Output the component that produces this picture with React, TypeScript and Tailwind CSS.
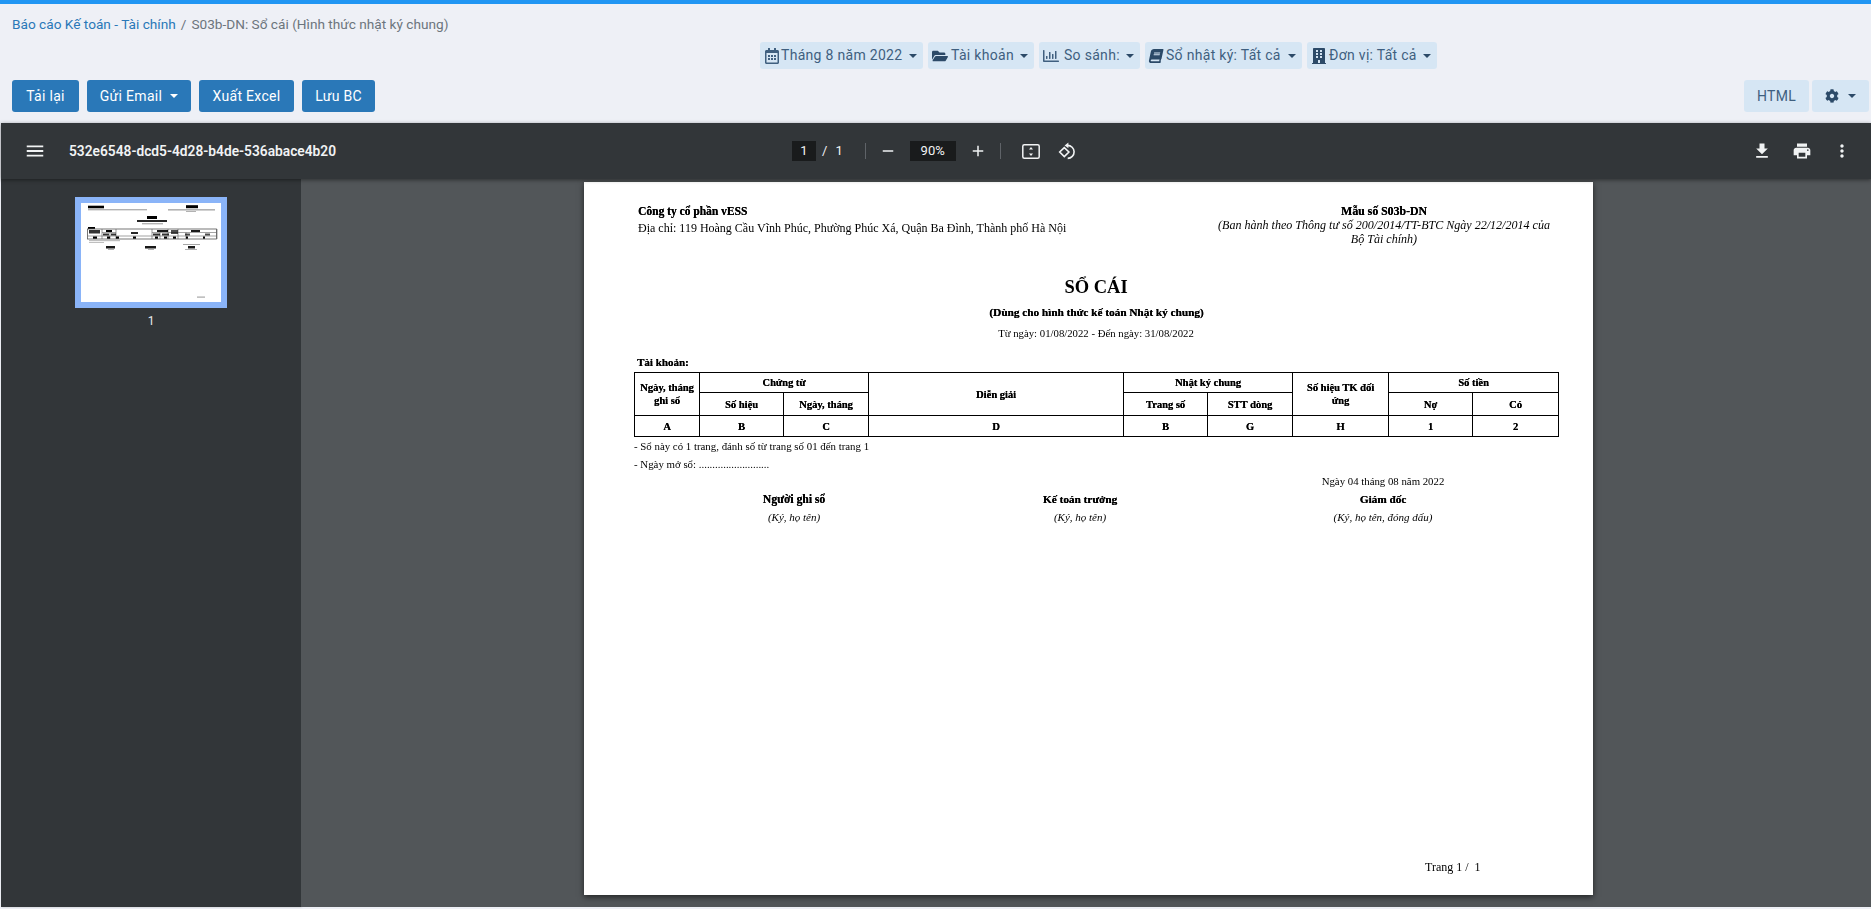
import React from "react";
import { FaRegCalendarAlt, FaFolderOpen, FaRegChartBar, FaBook, FaBuilding, FaCog } from "react-icons/fa";
import { MdMenu, MdRemove, MdAdd, MdFileDownload, MdPrint, MdMoreVert } from "react-icons/md";

const Caret = ({ cls = "" }: { cls?: string }) => (
  <span className={`inline-block w-0 h-0 border-x-[4px] border-x-transparent border-t-[4px] ${cls}`} />
);

const Filter = ({ icon, label, w, gap, pl }: { icon: React.ReactNode; label: string; w: string; gap: string; pl: string }) => (
  <button className={`${w} ${pl} h-[27px] flex items-center justify-between pr-[6px] rounded-[3px] bg-[#d6e6f4] text-[#3f5f7f] text-[14px] tracking-[0.3px] whitespace-nowrap`}>
    <span className={`flex items-center ${gap}`}>{icon}<span>{label}</span></span>
    <Caret cls="border-t-[#2c4a68]" />
  </button>
);

const Primary = ({ label, w, caret }: { label: string; w: string; caret?: boolean }) => (
  <button className={`${w} h-[32px] flex items-center justify-center gap-[8px] rounded-[3px] bg-[#2a78b8] text-white text-[14px] tracking-[0.3px]`}>
    <span>{label}</span>
    {caret && <Caret cls="border-t-white" />}
  </button>
);

const Th = ({ children, ...p }: React.ThHTMLAttributes<HTMLTableCellElement>) => (
  <th {...p} className="border border-black font-bold [text-shadow:0.2px_0_0_#000] text-center align-middle py-0 px-[5px] leading-[13px]">{children}</th>
);

const Thumb = () => (
  <svg width="140" height="99" viewBox="0 0 140 99" className="block bg-white">
    <g fill="#000" className="blur-[0.4px]">
      <rect x="7" y="2.7" width="16" height="2.6" />
      <rect x="7" y="6" width="59" height="1.4" opacity=".3" />
      <rect x="105" y="2.2" width="12" height="3" />
      <rect x="87" y="6" width="47" height="1.6" opacity=".3" />
      <rect x="105" y="8" width="10" height="1" opacity=".3" />
      <rect x="66" y="13" width="10" height="3" />
      <rect x="56" y="17" width="30" height="2" opacity=".85" />
      <rect x="61" y="20" width="21" height="1.4" opacity=".3" />
      <rect x="7" y="24" width="7" height="2" />
      <rect x="6.5" y="26" width="129" height="10" fill="none" stroke="#555" strokeWidth="0.8" />
      <path d="M21 26v10M29 29.5v6.5M35 26v10M71 26v10M79 29.5v6.5M87 26v10M97 26v10M105 29.5v6.5M136 26v10" stroke="#555" strokeWidth="0.6" />
      <path d="M21 29.5H35M71 29.5H97M97 29.5H136M6.5 33H136" stroke="#666" strokeWidth="0.6" />
      <rect x="8" y="27" width="11" height="3.5" opacity=".8" />
      <rect x="25" y="27" width="6" height="2" />
      <rect x="22" y="30.5" width="6" height="2" opacity=".8" />
      <rect x="30" y="30.5" width="5" height="2" opacity=".8" />
      <rect x="50" y="29" width="7" height="2" opacity=".85" />
      <rect x="76" y="27" width="11" height="2" opacity=".9" />
      <rect x="72" y="30.5" width="7" height="2" opacity=".8" />
      <rect x="81" y="30.5" width="7" height="2" opacity=".8" />
      <rect x="90" y="27" width="7" height="4" opacity=".7" />
      <rect x="110" y="27" width="9" height="2" opacity=".9" />
      <rect x="104" y="30.5" width="5" height="2" opacity=".7" />
      <rect x="124" y="30.5" width="5" height="2" opacity=".7" />
      <rect x="12" y="33.5" width="4" height="2.2" />
      <rect x="26" y="33.5" width="3" height="2.2" />
      <rect x="35" y="33.5" width="3" height="2.2" />
      <rect x="52" y="33.5" width="3" height="2.2" />
      <rect x="74" y="33.5" width="3" height="2.2" />
      <rect x="83" y="33.5" width="3" height="2.2" />
      <rect x="92" y="33.5" width="3" height="2.2" />
      <rect x="105" y="33.5" width="2" height="2.2" />
      <rect x="122" y="33.5" width="2" height="2.2" />
      <rect x="8" y="37" width="31" height="1.2" opacity=".25" />
      <rect x="8" y="39" width="15" height="1" opacity=".25" />
      <rect x="102" y="41" width="17" height="1" opacity=".35" />
      <rect x="25" y="43" width="9" height="2.5" opacity=".9" />
      <rect x="64" y="43" width="11" height="2.5" opacity=".9" />
      <rect x="107" y="43" width="7" height="2.5" opacity=".9" />
      <rect x="27" y="46" width="6" height="1" opacity=".3" />
      <rect x="67" y="46" width="6" height="1" opacity=".3" />
      <rect x="104" y="46" width="12" height="1" opacity=".3" />
      <rect x="116" y="93.5" width="8" height="1.2" opacity=".35" />
    </g>
  </svg>
);

const bold = "font-bold [text-shadow:0.2px_0_0_#000]";

export default function App() {
  return (
    <div className="h-[909px] overflow-hidden bg-[#eef0f6] border-t-4 border-[#2196f3] flex flex-col font-['Roboto',sans-serif]">
      <div className="h-[119px] shrink-0 pl-[12px] pr-[2px] flex flex-col">
        <div className="h-[38px] pt-[11px] text-[13.65px] leading-[18px] whitespace-nowrap">
          <span className="text-[#2a78b8]">Báo cáo Kế toán - Tài chính</span>
          <span className="text-[#6c757d] px-[5px]">/</span>
          <span className="text-[#6c757d]">S03b-DN: Sổ cái (Hình thức nhật ký chung)</span>
        </div>
        <div className="flex gap-[5px] pl-[748px]">
          <Filter w="w-[163px]" pl="pl-[4px]" gap="gap-[1px]" label="Tháng 8 năm 2022" icon={<FaRegCalendarAlt className="text-[16px]" />} />
          <Filter w="w-[106px]" pl="pl-[4px]" gap="gap-[3px]" label="Tài khoản" icon={<FaFolderOpen className="text-[16px] text-[#2c4a68]" />} />
          <Filter w="w-[101px]" pl="pl-[4px]" gap="gap-[5px]" label="So sánh:" icon={<FaRegChartBar className="text-[16px]" />} />
          <Filter w="w-[157px]" pl="pl-[4px]" gap="gap-[3px]" label="Sổ nhật ký: Tất cả" icon={<FaBook className="text-[14px] -skew-x-12 text-[#2c4a68]" />} />
          <Filter w="w-[130px]" pl="pl-[4px]" gap="gap-[2px]" label="Đơn vị: Tất cả" icon={<FaBuilding className="text-[16px] text-[#2c4a68]" />} />
        </div>
        <div className="mt-[11px] flex justify-between">
          <div className="flex gap-[8px]">
            <Primary w="w-[67px]" label="Tải lại" />
            <Primary w="w-[104px]" label="Gửi Email" caret />
            <Primary w="w-[95px]" label="Xuất Excel" />
            <Primary w="w-[73px]" label="Lưu BC" />
          </div>
          <div className="flex gap-[3px]">
            <button className="w-[65px] h-[32px] rounded-[3px] bg-[#d6e6f4] text-[#3f5f7f] text-[14px] tracking-[0.3px]">HTML</button>
            <button className="w-[57px] h-[32px] rounded-[3px] bg-[#d6e6f4] flex items-center justify-center gap-[9px] text-[#2c4a68]">
              <FaCog className="text-[14px]" />
              <Caret cls="border-t-[#2c4a68]" />
            </button>
          </div>
        </div>
      </div>

      <div className="flex-1 min-h-0 ml-px mb-[2px] flex flex-col">
        <div className="relative z-10 h-[56px] shrink-0 bg-[#323639] shadow-[0_1px_4px_rgba(0,0,0,0.45)] flex items-center text-white">
          <div className="flex items-center w-[791px] pl-[23px]">
            <MdMenu className="text-[22px] text-[#f1f3f4]" />
            <span className="ml-[23px] text-[13.75px] font-semibold text-[#f1f3f4]">532e6548-dcd5-4d28-b4de-536abace4b20</span>
          </div>
          <div className="flex items-center text-[13px] text-[#f1f3f4]">
            <span className="w-[24px] h-[20px] bg-[#191b1c] flex items-center justify-center">1</span>
            <span className="ml-[6px]">/</span>
            <span className="ml-[8px]">1</span>
            <span className="ml-[22px] w-px h-[16px] bg-[#5f6368]" />
            <MdRemove className="ml-[13px] text-[18px]" />
            <span className="ml-[13px] w-[46px] h-[20px] bg-[#191b1c] flex items-center justify-center">90%</span>
            <MdAdd className="ml-[13px] text-[18px]" />
            <span className="ml-[13px] w-px h-[16px] bg-[#5f6368]" />
            <svg className="ml-[21px]" width="18" height="15" viewBox="0 0 18 15" fill="none">
              <rect x="0.8" y="0.8" width="16.4" height="13.4" rx="1.5" stroke="#f1f3f4" strokeWidth="1.5" />
              <path d="M9 3 11 5.6H7zM9 12 7 9.4h4z" fill="#f1f3f4" />
            </svg>
            <svg className="ml-[18px]" width="18" height="18" viewBox="0 0 18 18" fill="none" stroke="#f1f3f4" strokeWidth="1.6">
              <path d="M6.3 5.6 1.7 10l4.6 4.6 4.6-4.6z" />
              <path d="M9.5 3.4a6.5 6.5 0 0 1 .2 13" />
              <path d="M10.4 .6V6.2L6.6 3.4z" fill="#f1f3f4" stroke="none" />
            </svg>
          </div>
          <div className="ml-auto flex items-center gap-[20px] pr-[19px] text-[#f1f3f4]">
            <MdFileDownload className="text-[20px]" />
            <MdPrint className="text-[20px]" />
            <MdMoreVert className="text-[20px]" />
          </div>
        </div>

        <div className="flex-1 min-h-0 flex">
          <aside className="w-[300px] shrink-0 bg-[#323639] flex flex-col items-center pt-[18px] shadow-[1px_0_2px_rgba(0,0,0,0.2)]">
            <div className="border-[6px] border-[#8ab4f8]"><Thumb /></div>
            <div className="mt-[6px] text-[12px] leading-[14px] text-[#e8eaed]">1</div>
          </aside>
          <main className="flex-1 min-w-0 bg-[#525659] pl-[283px] pt-[3px]">
            <div className="w-[1009px] h-[713px] bg-white shadow-[0_2px_6px_rgba(0,0,0,0.6)] text-black font-['Liberation_Serif',serif] text-[12px] leading-[15px]">
              <div className="h-full pt-[22px] pl-[50px] pr-[39px] flex flex-col blur-[0.25px]">
                <div className="flex justify-between">
                  <div className="pl-[4px]">
                    <div className={`${bold} text-[11.5px]`}>Công ty cổ phần vESS</div>
                    <div className="mt-[2px]">Địa chỉ: 119 Hoàng Cầu Vĩnh Phúc, Phường Phúc Xá, Quận Ba Đình, Thành phố Hà Nội</div>
                  </div>
                  <div className="w-[340px] text-center">
                    <div className={`${bold} text-[11.8px]`}>Mẫu số S03b-DN</div>
                    <div className="italic text-[12.05px] leading-[14px] -mt-[1px]">(Ban hành theo Thông tư số 200/2014/TT-BTC Ngày 22/12/2014 của Bộ Tài chính)</div>
                  </div>
                </div>
                <div className="w-[924px] mt-[29px] text-center text-[18.5px] leading-[24px] font-bold">SỔ CÁI</div>
                <div className={`w-[925px] mt-[6px] text-center text-[11.25px] ${bold}`}>(Dùng cho hình thức kế toán Nhật ký chung)</div>
                <div className="w-[924px] mt-[6px] text-center text-[10.75px]">Từ ngày: 01/08/2022 - Đến ngày: 31/08/2022</div>
                <div className={`mt-[14px] pl-[3px] text-[11px] ${bold}`}>Tài khoản:</div>
                <table className="mt-[2px] w-[924px] table-fixed border-collapse border border-black text-[10.5px]">
                  <colgroup>
                    <col className="w-[65px]" /><col className="w-[84px]" /><col className="w-[85px]" /><col className="w-[255px]" /><col className="w-[84px]" /><col className="w-[85px]" /><col className="w-[96px]" /><col className="w-[84px]" /><col className="w-[86px]" />
                  </colgroup>
                  <thead>
                    <tr className="h-[20px]">
                      <Th rowSpan={2}>Ngày, tháng ghi sổ</Th>
                      <Th colSpan={2}>Chứng từ</Th>
                      <Th rowSpan={2}>Diễn giải</Th>
                      <Th colSpan={2}>Nhật ký chung</Th>
                      <Th rowSpan={2}>Số hiệu TK đối ứng</Th>
                      <Th colSpan={2}>Số tiền</Th>
                    </tr>
                    <tr className="h-[23px]">
                      <Th>Số hiệu</Th><Th>Ngày, tháng</Th><Th>Trang số</Th><Th>STT dòng</Th><Th>Nợ</Th><Th>Có</Th>
                    </tr>
                    <tr className="h-[21px]">
                      {["A", "B", "C", "D", "B", "G", "H", "1", "2"].map((c, i) => <Th key={i}>{c}</Th>)}
                    </tr>
                  </thead>
                </table>
                <div className="mt-[2px] text-[10.85px] leading-[15px]">- Sổ này có 1 trang, đánh số từ trang số 01 đến trang 1</div>
                <div className="mt-[3px] text-[10.85px] leading-[15px]">- Ngày mở sổ: ..........................</div>
                <div className="flex text-center w-[924px] mt-[2px]">
                  <div className="ml-[100px] w-[120px] pt-[18px]">
                    <div className={`${bold} text-[11.6px]`}>Người ghi sổ</div>
                    <div className="mt-[3px] italic text-[11px]">(Ký, họ tên)</div>
                  </div>
                  <div className="ml-[166px] w-[120px] pt-[18px]">
                    <div className={`${bold} text-[11.25px]`}>Kế toán trưởng</div>
                    <div className="mt-[3px] italic text-[11px]">(Ký, họ tên)</div>
                  </div>
                  <div className="ml-[153px] w-[180px]">
                    <div className="text-[10.8px] leading-[15px]">Ngày 04 tháng 08 năm 2022</div>
                    <div className={`mt-[3px] ${bold} text-[11.25px]`}>Giám đốc</div>
                    <div className="mt-[3px] italic text-[11px]">(Ký, họ tên, đóng dấu)</div>
                  </div>
                </div>
                <div className="mt-[335px] pl-[791px] text-[12px] whitespace-pre">Trang 1 /  1</div>
              </div>
            </div>
          </main>
        </div>
      </div>
    </div>
  );
}
